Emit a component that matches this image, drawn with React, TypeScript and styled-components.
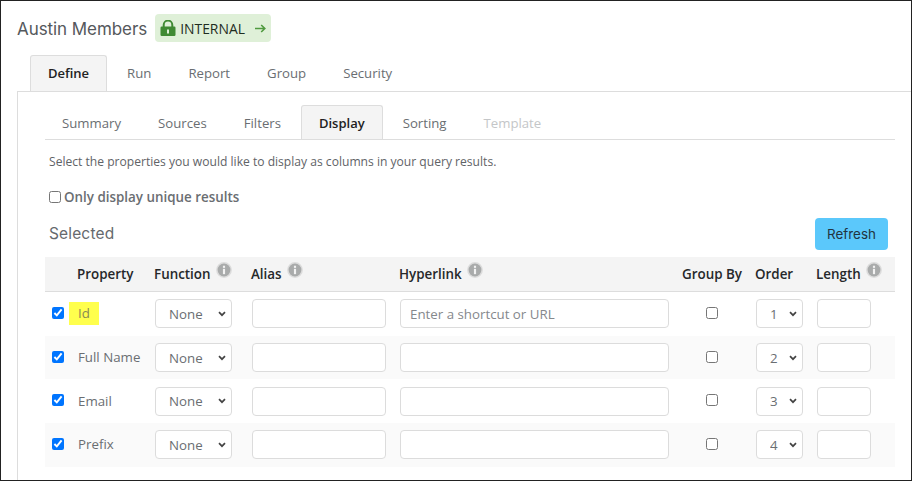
import React from 'react';
import styled, { createGlobalStyle } from 'styled-components';

const GlobalStyle = createGlobalStyle`
  html, body {
    margin: 0;
    padding: 0;
    background: #fff;
  }
  body {
    font-family: "Open Sans", "Liberation Sans", sans-serif;
  }
`;

const Frame = styled.div`
  box-sizing: border-box;
  width: 912px;
  height: 481px;
  border: 1px solid #222;
  padding-top: 13px;
  overflow: hidden;
`;

const TitleRow = styled.div`
  display: flex;
  align-items: center;
  height: 28px;
  margin: 0 0 13px 16px;
`;

const Title = styled.h1`
  margin: 1px 8px 0 0;
  font-family: Inter, "Liberation Sans", sans-serif;
  font-size: 17px;
  font-weight: 400;
  letter-spacing: -0.07px;
  color: #55585c;
`;

const Badge = styled.div`
  display: flex;
  align-items: center;
  box-sizing: border-box;
  width: 116px;
  height: 28px;
  padding-left: 5px;
  border-radius: 4px;
  background: #dff0d8;
  font-size: 13.9px;
  color: #1f2d1f;
`;

const BadgeLabel = styled.span`
  margin: 0 10px 0 4px;
`;

const MainTabs = styled.div`
  display: flex;
  margin-left: 29px;
`;

const SubTabs = styled.div`
  display: flex;
  border-bottom: 1px solid #ddd;
`;

const Tab = styled.div<{ $active?: boolean; $disabled?: boolean }>`
  box-sizing: border-box;
  height: 36px;
  line-height: 34px;
  padding: 0 ${(p) => (p.$active ? '17px' : '16px')};
  margin-right: 3px;
  font-size: ${(p) => (p.$active ? '13px' : '13.2px')};
  font-weight: ${(p) => (p.$active ? 600 : 400)};
  color: ${(p) => (p.$active ? '#222' : p.$disabled ? '#c4c6c8' : '#6a6e72')};
  background: ${(p) => (p.$active ? '#f4f4f4' : 'transparent')};
  border: 1px solid ${(p) => (p.$active ? '#ddd' : 'transparent')};
  border-bottom: none;
  border-radius: 3px 3px 0 0;
`;

const SubTab = styled(Tab)`
  height: 34px;
  line-height: 34px;
`;

const Panel = styled.div`
  margin-left: 16px;
  padding: 13px 0 0 27px;
  border-top: 1px solid #ddd;
  border-left: 1px solid #ddd;
  height: 400px;
`;

const Content = styled.div`
  width: 850px;
`;

const Description = styled.p`
  margin: 0;
  padding: 13px 0 0 4px;
  font-size: 12.1px;
  line-height: 17px;
  color: #5f6367;
`;

const UniqueLabel = styled.label`
  display: flex;
  align-items: center;
  margin: 18px 0 0 4px;
  font-size: 13.4px;
  line-height: 18px;
  font-weight: 600;
  color: #6a6e72;
`;

const BoxInput = styled.input`
  width: 12px;
  height: 12px;
  margin: 0;
`;

const UniqueBox = styled(BoxInput)`
  margin-right: 3px;
`;

const SectionRow = styled.div`
  display: flex;
  align-items: center;
  justify-content: space-between;
  height: 32px;
  margin-top: 12px;
  padding: 0 7px 0 4px;
`;

const SectionTitle = styled.h2`
  margin: -2px 0 0;
  font-family: Inter, "Liberation Sans", sans-serif;
  font-size: 15.5px;
  font-weight: 400;
  letter-spacing: 0.15px;
  color: #66696d;
`;

const RefreshButton = styled.button`
  width: 73px;
  height: 32px;
  padding: 0;
  border: none;
  border-radius: 4px;
  background: #5bc8fb;
  font-family: Inter, "Liberation Sans", sans-serif;
  font-size: 13.4px;
  color: #22343f;
`;

const columns = '32px 77px 97px 148px 283px 73px 61px 79px';

const HeaderRow = styled.div`
  display: grid;
  grid-template-columns: ${columns};
  align-items: center;
  box-sizing: border-box;
  height: 35px;
  margin-top: 7px;
  background: #f4f4f4;
  border-bottom: 1px solid #ddd;
  font-size: 13.4px;
  font-weight: 600;
  color: #26282a;
`;

const HeaderCell = styled.div<{ $col: number }>`
  grid-column: ${(p) => p.$col};
  display: flex;
  align-items: flex-start;
  white-space: nowrap;
`;

const InfoMark = styled.svg`
  margin: -3px 0 0 5px;
`;

const Row = styled.div<{ $shaded?: boolean }>`
  display: grid;
  grid-template-columns: ${columns};
  align-items: center;
  height: 43.7px;
  background: ${(p) => (p.$shaded ? '#fafafa' : '#fff')};
`;

const CheckCell = styled.div`
  display: flex;
  padding-left: 7px;
  margin-top: -2px;
`;

const GroupCell = styled.div`
  display: flex;
  justify-content: center;
  margin: -2px 13px 0 0;
`;

const PropertyName = styled.span<{ $mark?: boolean }>`
  justify-self: start;
  margin: 0 0 0 ${(p) => (p.$mark ? '-8px' : '1px')};
  padding: 0 ${(p) => (p.$mark ? '9px' : '0')};
  line-height: 23px;
  font-size: 13.3px;
  color: ${(p) => (p.$mark ? '#8a8a55' : '#6a6e72')};
  background: ${(p) => (p.$mark ? '#ffff4d' : 'transparent')};
`;

const fieldStyle = `
  box-sizing: border-box;
  height: 29px;
  border: 1px solid #dcdcdc;
  border-radius: 4px;
  background-color: #fff;
  font-family: "Open Sans", "Liberation Sans", sans-serif;
  font-size: 13.3px;
  color: #6a6e72;
`;

const chevron =
  "url(\"data:image/svg+xml,%3Csvg xmlns='http://www.w3.org/2000/svg' width='8' height='6' viewBox='0 0 8 6'%3E%3Cpath d='M1 1.2 4 4.2 7 1.2' fill='none' stroke='%23444' stroke-width='1.7'/%3E%3C/svg%3E\")";

const selectStyle = `
  ${fieldStyle}
  appearance: none;
  margin-left: 1px;
  padding-left: 13px;
  background-image: ${chevron};
  background-repeat: no-repeat;
  background-position: right 5px center;
`;

const FunctionSelect = styled.select`
  ${selectStyle}
  width: 77px;
`;

const OrderSelect = styled.select`
  ${selectStyle}
  width: 47px;
`;

const TextField = styled.input<{ $width: number }>`
  ${fieldStyle}
  width: ${(p) => p.$width}px;
  margin-left: 1px;
  padding: 0 9px;
  outline: none;
  &::placeholder {
    color: #85888c;
    opacity: 1;
  }
`;

function Lock() {
  return (
    <svg width="16" height="16" viewBox="0 0 16 16">
      <path d="M3.7 7V4.9a4.3 4.3 0 0 1 8.6 0V7" fill="none" stroke="#3f8a33" strokeWidth="2" />
      <rect x="0.5" y="6.5" width="15" height="9.5" rx="1.2" fill="#3f8a33" />
      <rect x="7" y="9.5" width="2" height="4" fill="#dff0d8" />
    </svg>
  );
}

function Arrow() {
  return (
    <svg width="11" height="9" viewBox="0 0 11 9">
      <path d="M0 4.5h9.6M6.2 1 9.8 4.5 6.2 8" fill="none" stroke="#4f9a3f" strokeWidth="1.6" />
    </svg>
  );
}

function Info() {
  return (
    <InfoMark width="16" height="16" viewBox="0 0 15 15">
      <circle cx="7.5" cy="7.5" r="7.4" fill="#dcdcdc" />
      <circle cx="7.5" cy="7.5" r="6" fill="#a9abab" />
      <rect x="6.5" y="6.4" width="2" height="5" fill="#f2f2f2" />
      <rect x="6.5" y="3.5" width="2" height="2" fill="#f2f2f2" />
    </InfoMark>
  );
}

const mainTabs = ['Define', 'Run', 'Report', 'Group', 'Security'];
const subTabs = ['Summary', 'Sources', 'Filters', 'Display', 'Sorting', 'Template'];
const properties = ['Id', 'Full Name', 'Email', 'Prefix'];

const headers: { label: string; col: number; info?: boolean }[] = [
  { label: 'Property', col: 2 },
  { label: 'Function', col: 3, info: true },
  { label: 'Alias', col: 4, info: true },
  { label: 'Hyperlink', col: 5, info: true },
  { label: 'Group By', col: 6 },
  { label: 'Order', col: 7 },
  { label: 'Length', col: 8, info: true },
];

export default function App() {
  return (
    <Frame>
      <GlobalStyle />
      <TitleRow>
        <Title>Austin Members</Title>
        <Badge>
          <Lock />
          <BadgeLabel>INTERNAL</BadgeLabel>
          <Arrow />
        </Badge>
      </TitleRow>

      <MainTabs>
        {mainTabs.map((t) => (
          <Tab key={t} $active={t === 'Define'}>{t}</Tab>
        ))}
      </MainTabs>

      <Panel>
        <Content>
          <SubTabs>
            {subTabs.map((t) => (
              <SubTab key={t} $active={t === 'Display'} $disabled={t === 'Template'}>{t}</SubTab>
            ))}
          </SubTabs>

          <Description>Select the properties you would like to display as columns in your query results.</Description>

          <UniqueLabel>
            <UniqueBox type="checkbox" />
            Only display unique results
          </UniqueLabel>

          <SectionRow>
            <SectionTitle>Selected</SectionTitle>
            <RefreshButton>Refresh</RefreshButton>
          </SectionRow>

          <HeaderRow>
            {headers.map((h) => (
              <HeaderCell key={h.label} $col={h.col}>
                {h.label}
                {h.info && <Info />}
              </HeaderCell>
            ))}
          </HeaderRow>

          {properties.map((name, i) => (
            <Row key={name} $shaded={i % 2 === 1}>
              <CheckCell><BoxInput type="checkbox" defaultChecked /></CheckCell>
              <PropertyName $mark={i === 0}>{name}</PropertyName>
              <FunctionSelect defaultValue="None">
                <option>None</option>
              </FunctionSelect>
              <TextField $width={134} />
              <TextField $width={269} placeholder={i === 0 ? 'Enter a shortcut or URL' : undefined} />
              <GroupCell><BoxInput type="checkbox" /></GroupCell>
              <OrderSelect defaultValue={i + 1}>
                {properties.map((_, n) => (
                  <option key={n} value={n + 1}>{n + 1}</option>
                ))}
              </OrderSelect>
              <TextField $width={54} />
            </Row>
          ))}
        </Content>
      </Panel>
    </Frame>
  );
}
